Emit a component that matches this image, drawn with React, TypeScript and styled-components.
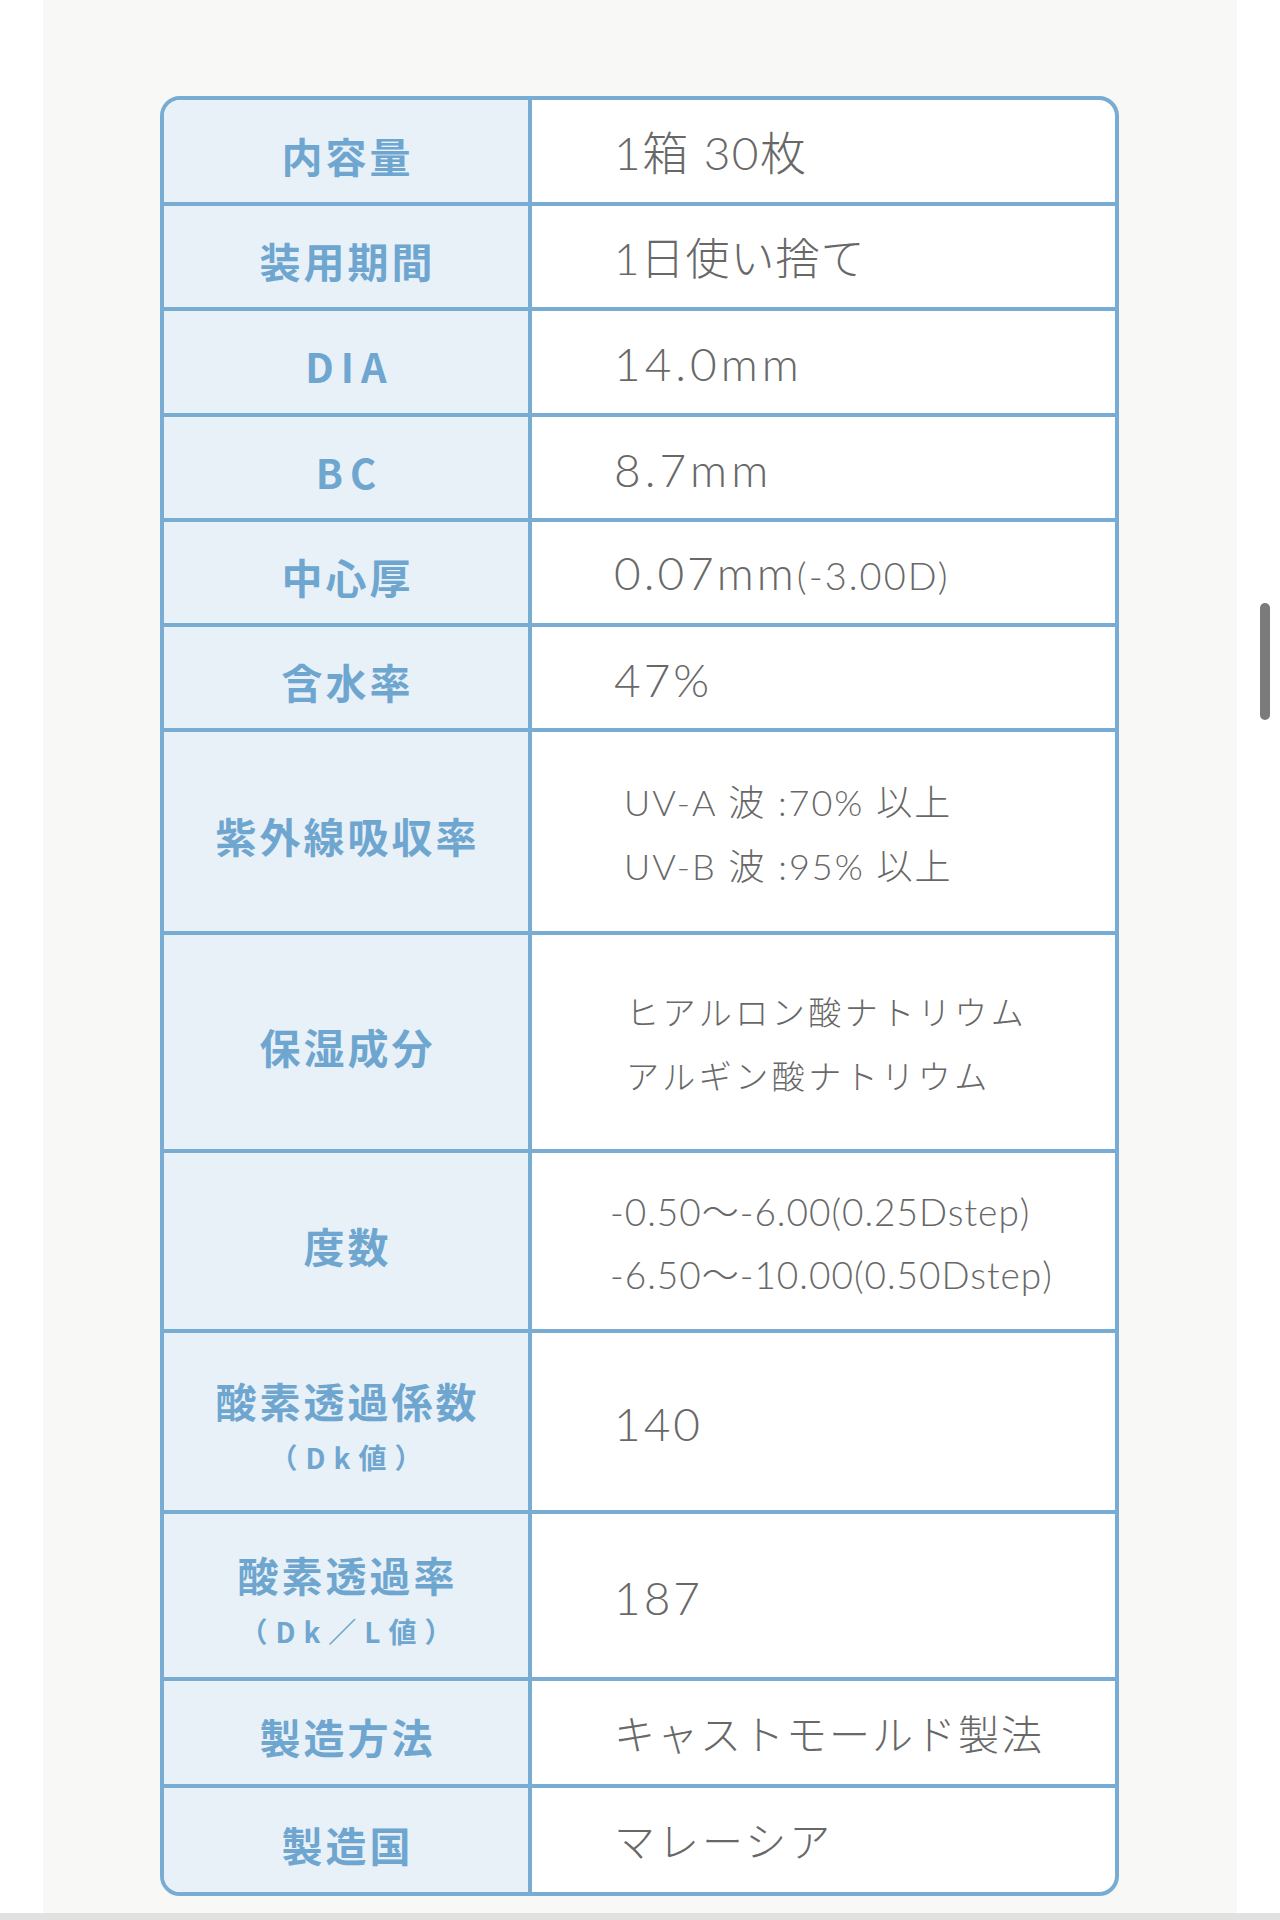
import React from "react";
import styled, { createGlobalStyle } from "styled-components";

const GlobalStyle = createGlobalStyle`
  html, body {
    margin: 0;
    padding: 0;
    background: #ffffff;
  }
  body {
    font-family: "Noto Sans CJK JP", "Noto Sans", sans-serif;
  }
`;

const Page = styled.div`
  width: 1280px;
  display: flex;
  flex-direction: column;
`;

const Stage = styled.div`
  display: flex;
  justify-content: center;
  background: #ffffff;
`;

const Panel = styled.main`
  width: 1194px;
  height: 1913px;
  box-sizing: border-box;
  background: #f8f8f6;
  padding: 96px 118px 0 117px;
`;

const BottomBar = styled.div`
  height: 7px;
  background: #e1e1e1;
`;

const ScrollThumb = styled.div`
  position: absolute;
  left: 1260px;
  top: 603px;
  width: 10px;
  height: 117px;
  border-radius: 5px;
  background: #7b7b7b;
`;

const Table = styled.section`
  border: 4px solid #79acd3;
  border-radius: 20px;
  overflow: hidden;
  background: #ffffff;
  display: flex;
  flex-direction: column;
`;

const Row = styled.div<{ $h: number }>`
  display: grid;
  grid-template-columns: 368px 1fr;
  height: ${(p) => p.$h}px;
  & + & {
    border-top: 4px solid #79acd3;
  }
`;

const Label = styled.div<{ $lineGap?: number }>`
  background: #e8f1f8;
  border-right: 4px solid #79acd3;
  display: flex;
  flex-direction: column;
  align-items: center;
  justify-content: center;
  gap: ${(p) => p.$lineGap ?? 0}px;
  padding-top: 8px;
  box-sizing: border-box;
  color: #6fa6cf;
  font-family: "Noto Sans CJK JP", "Noto Sans", sans-serif;
  font-weight: 700;
`;

const LabelMain = styled.span<{ $latin?: boolean }>`
  font-size: ${(p) => (p.$latin ? 40 : 41)}px;
  line-height: 1;
  letter-spacing: ${(p) => (p.$latin ? 7 : 3)}px;
  margin-right: -${(p) => (p.$latin ? 7 : 3)}px;
`;

const LabelSub = styled.span`
  font-size: 28px;
  line-height: 1;
  letter-spacing: 8px;
  margin-right: -8px;
  font-weight: 700;
`;

const Value = styled.div<{ $pad: number }>`
  display: flex;
  flex-direction: column;
  justify-content: center;
  padding-left: ${(p) => p.$pad}px;
  padding-top: 4px;
  box-sizing: border-box;
  color: #686868;
  font-family: "Lato", "Noto Sans CJK JP", sans-serif;
  font-weight: 300;
`;

const ValueText = styled.div<{ $size: number; $ls?: number; $lh?: number }>`
  font-size: ${(p) => p.$size}px;
  letter-spacing: ${(p) => p.$ls ?? 1}px;
  line-height: ${(p) => p.$lh ?? p.$size * 1.2}px;
  white-space: nowrap;
`;

const Small = styled.span`
  font-size: 38px;
  letter-spacing: 2px;
`;

type Spec = {
  h: number;
  label: string;
  sub?: string;
  latin?: boolean;
  labelGap?: number;
  pad: number;
  size: number;
  ls?: number;
  lh?: number;
  lines: React.ReactNode[];
};

const rows: Spec[] = [
  { h: 102, label: "内容量", pad: 82, size: 46, ls: 1.5, lines: ["1箱 30枚"] },
  { h: 101, label: "装用期間", pad: 82, size: 44, lines: ["1日使い捨て"] },
  { h: 102, label: "DIA", latin: true, pad: 82, size: 46, ls: 4, lines: ["14.0mm"] },
  { h: 101, label: "BC", latin: true, pad: 82, size: 46, ls: 4, lines: ["8.7mm"] },
  {
    h: 101,
    label: "中心厚",
    pad: 82,
    size: 46,
    ls: 3,
    lines: [
      <>
        0.07mm<Small>(-3.00D)</Small>
      </>,
    ],
  },
  { h: 101, label: "含水率", pad: 82, size: 46, ls: 3, lines: ["47%"] },
  {
    h: 199,
    label: "紫外線吸収率",
    pad: 92,
    size: 36,
    ls: 2,
    lh: 64,
    lines: ["UV-A 波 :70% 以上", "UV-B 波 :95% 以上"],
  },
  {
    h: 214,
    label: "保湿成分",
    pad: 94,
    size: 33,
    ls: 3.5,
    lh: 64,
    lines: ["ヒアルロン酸ナトリウム", "アルギン酸ナトリウム"],
  },
  {
    h: 176,
    label: "度数",
    pad: 78,
    size: 37,
    ls: 1,
    lh: 63,
    lines: ["-0.50〜-6.00(0.25Dstep)", "-6.50〜-10.00(0.50Dstep)"],
  },
  {
    h: 177,
    label: "酸素透過係数",
    sub: "（Dk値）",
    labelGap: 22,
    pad: 82,
    size: 46,
    ls: 3,
    lines: ["140"],
  },
  {
    h: 163,
    label: "酸素透過率",
    sub: "（Dk／L値）",
    labelGap: 22,
    pad: 82,
    size: 46,
    ls: 3,
    lines: ["187"],
  },
  { h: 103, label: "製造方法", pad: 82, size: 41, ls: 2, lines: ["キャストモールド製法"] },
  { h: 104, label: "製造国", pad: 82, size: 41, ls: 3, lines: ["マレーシア"] },
];

export default function App() {
  return (
    <Page>
      <GlobalStyle />
      <Stage>
        <Panel>
          <Table>
            {rows.map((r) => (
              <Row key={r.label} $h={r.h}>
                <Label $lineGap={r.labelGap}>
                  <LabelMain $latin={r.latin}>{r.label}</LabelMain>
                  {r.sub && <LabelSub>{r.sub}</LabelSub>}
                </Label>
                <Value $pad={r.pad}>
                  {r.lines.map((l, i) => (
                    <ValueText key={i} $size={r.size} $ls={r.ls} $lh={r.lh}>
                      {l}
                    </ValueText>
                  ))}
                </Value>
              </Row>
            ))}
          </Table>
        </Panel>
      </Stage>
      <BottomBar />
      <ScrollThumb />
    </Page>
  );
}
